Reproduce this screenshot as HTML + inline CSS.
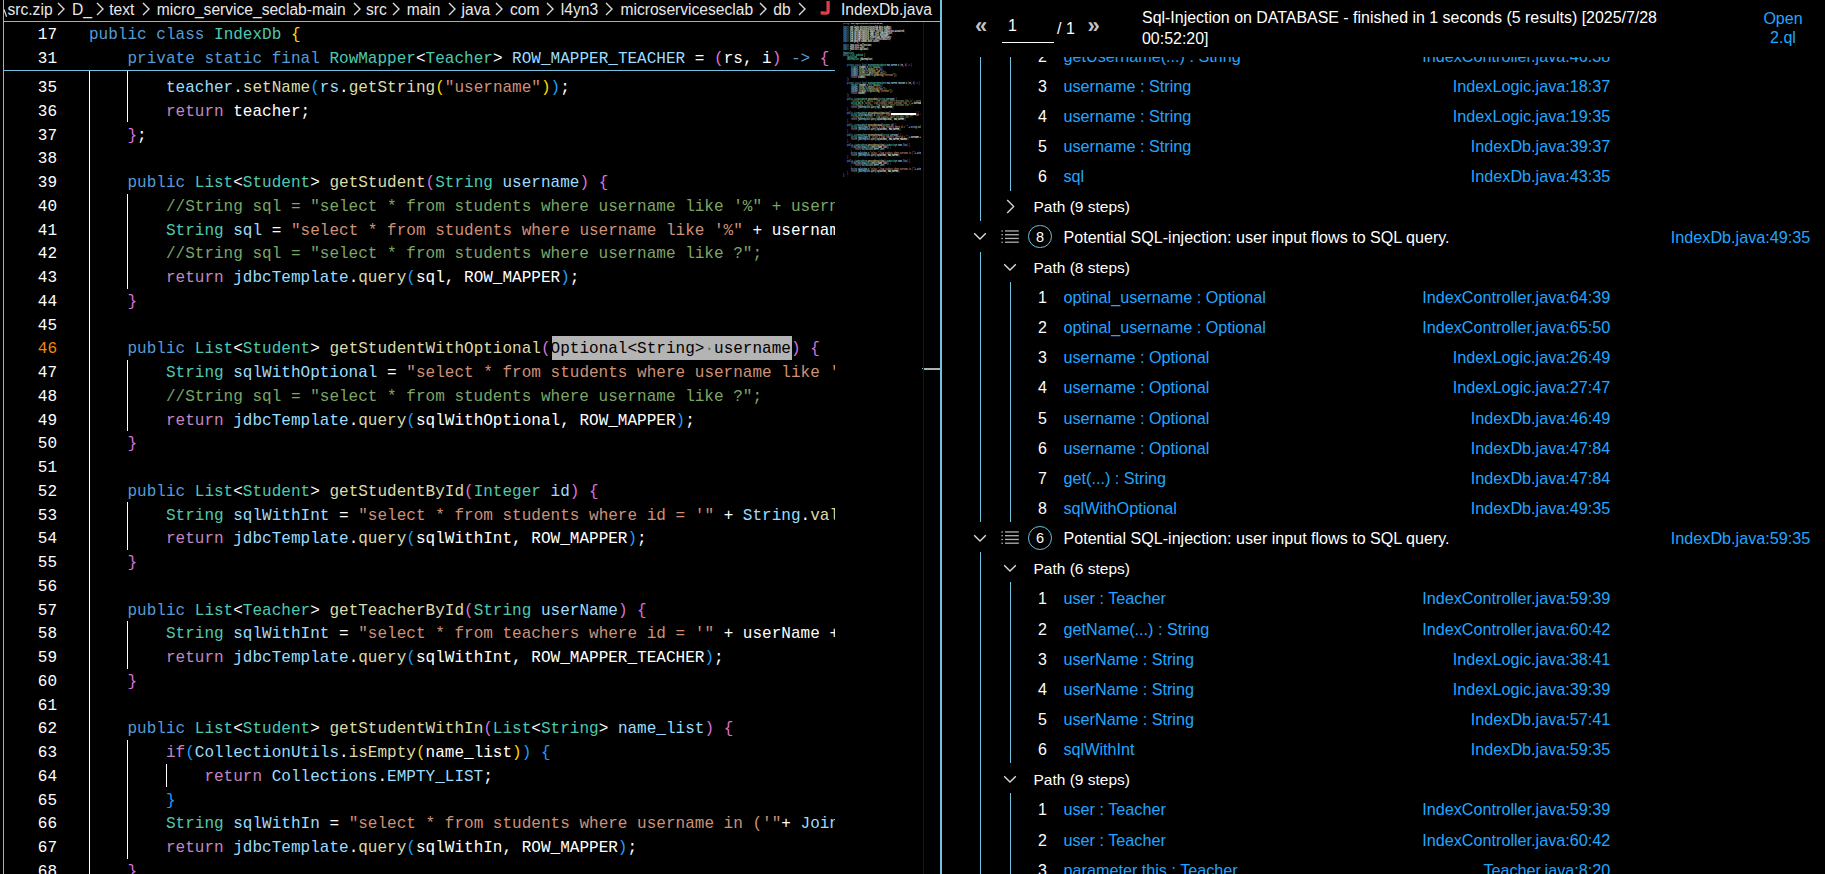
<!DOCTYPE html>
<html><head><meta charset="utf-8">
<style>
html,body{margin:0;padding:0;background:#000;width:1825px;height:874px;overflow:hidden;position:relative}
.abs{position:absolute}
.code{position:absolute;white-space:pre;font-family:"Liberation Mono",monospace;font-size:17.00px;line-height:23.75px;height:23.75px;transform:scaleX(0.94249);transform-origin:0 0}
.ln{position:absolute;left:0;width:57px;text-align:right;white-space:pre;font-family:"Liberation Mono",monospace;font-size:17.00px;line-height:23.75px;color:#fff;transform:scaleX(0.94249);transform-origin:100% 0}
.ui{position:absolute;white-space:pre;font-family:"Liberation Sans",sans-serif;font-size:16px;}
.guide{position:absolute;width:1px;background:#fff}
.tg{position:absolute;width:1px;background:#6FC3DF}
</style></head><body>
<div class="abs" style="left:3px;top:0;width:1px;height:874px;background:#6FC3DF"></div><div class="abs" style="left:3px;top:21px;width:938px;height:1px;background:#6FC3DF"></div><div class="abs" style="left:940px;top:0;width:2px;height:874px;background:#6FC3DF"></div><div class="abs" style="left:4px;top:0;width:936px;height:21px;overflow:hidden"><div class="ui bc" style="left:3.5px;top:0;height:21px;line-height:20px;font-size:15.6px;color:#e8e8e8">src.zip</div><div class="ui bc" style="left:68.0px;top:0;height:21px;line-height:20px;font-size:15.6px;color:#e8e8e8">D_</div><div class="ui bc" style="left:105.2px;top:0;height:21px;line-height:20px;font-size:15.6px;color:#e8e8e8">text</div><div class="ui bc" style="left:152.8px;top:0;height:21px;line-height:20px;font-size:15.6px;color:#e8e8e8">micro_service_seclab-main</div><div class="ui bc" style="left:362.0px;top:0;height:21px;line-height:20px;font-size:15.6px;color:#e8e8e8">src</div><div class="ui bc" style="left:402.7px;top:0;height:21px;line-height:20px;font-size:15.6px;color:#e8e8e8">main</div><div class="ui bc" style="left:457.5px;top:0;height:21px;line-height:20px;font-size:15.6px;color:#e8e8e8">java</div><div class="ui bc" style="left:506.0px;top:0;height:21px;line-height:20px;font-size:15.6px;color:#e8e8e8">com</div><div class="ui bc" style="left:556.8px;top:0;height:21px;line-height:20px;font-size:15.6px;color:#e8e8e8">l4yn3</div><div class="ui bc" style="left:616.5px;top:0;height:21px;line-height:20px;font-size:15.6px;color:#e8e8e8">microserviceseclab</div><div class="ui bc" style="left:769.3px;top:0;height:21px;line-height:20px;font-size:15.6px;color:#e8e8e8">db</div><svg class="abs" style="left:0;top:0" width="6" height="20" viewBox="0 0 6 20"><path d="M0 9.5 L2.6 16.8" stroke="#e0e0e0" stroke-width="1.2" fill="none"/></svg><svg class="abs" style="left:53.3px;top:1.5px" width="9" height="14" viewBox="0 0 9 14"><path d="M1 1 L7 7 L1 13" fill="none" stroke="#dcdcdc" stroke-width="1.4"/></svg><svg class="abs" style="left:91.5px;top:1.5px" width="9" height="14" viewBox="0 0 9 14"><path d="M1 1 L7 7 L1 13" fill="none" stroke="#dcdcdc" stroke-width="1.4"/></svg><svg class="abs" style="left:138.4px;top:1.5px" width="9" height="14" viewBox="0 0 9 14"><path d="M1 1 L7 7 L1 13" fill="none" stroke="#dcdcdc" stroke-width="1.4"/></svg><svg class="abs" style="left:349.0px;top:1.5px" width="9" height="14" viewBox="0 0 9 14"><path d="M1 1 L7 7 L1 13" fill="none" stroke="#dcdcdc" stroke-width="1.4"/></svg><svg class="abs" style="left:388.0px;top:1.5px" width="9" height="14" viewBox="0 0 9 14"><path d="M1 1 L7 7 L1 13" fill="none" stroke="#dcdcdc" stroke-width="1.4"/></svg><svg class="abs" style="left:443.5px;top:1.5px" width="9" height="14" viewBox="0 0 9 14"><path d="M1 1 L7 7 L1 13" fill="none" stroke="#dcdcdc" stroke-width="1.4"/></svg><svg class="abs" style="left:491.4px;top:1.5px" width="9" height="14" viewBox="0 0 9 14"><path d="M1 1 L7 7 L1 13" fill="none" stroke="#dcdcdc" stroke-width="1.4"/></svg><svg class="abs" style="left:542.0px;top:1.5px" width="9" height="14" viewBox="0 0 9 14"><path d="M1 1 L7 7 L1 13" fill="none" stroke="#dcdcdc" stroke-width="1.4"/></svg><svg class="abs" style="left:601.0px;top:1.5px" width="9" height="14" viewBox="0 0 9 14"><path d="M1 1 L7 7 L1 13" fill="none" stroke="#dcdcdc" stroke-width="1.4"/></svg><svg class="abs" style="left:755.3px;top:1.5px" width="9" height="14" viewBox="0 0 9 14"><path d="M1 1 L7 7 L1 13" fill="none" stroke="#dcdcdc" stroke-width="1.4"/></svg><svg class="abs" style="left:793.6px;top:1.5px" width="9" height="14" viewBox="0 0 9 14"><path d="M1 1 L7 7 L1 13" fill="none" stroke="#dcdcdc" stroke-width="1.4"/></svg><svg class="abs" style="left:816.0px;top:0" width="14" height="18" viewBox="0 0 14 18"><path d="M8.1 0.9 V11.6 Q8.1 13.2 6.4 13.2 H2.2 V11.2" fill="none" stroke="#dc3f48" stroke-width="3.3" stroke-linejoin="round"/></svg><div class="ui bc" style="left:836.9px;top:0;height:21px;line-height:20px;font-size:15.6px;color:#e8e8e8">IndexDb.java</div></div><div class="abs" style="left:4px;top:22px;width:831px;height:852px;overflow:hidden"><div class="ln" style="top:30.40px;width:53px">34</div><div class="code" style="left:84.80px;top:30.40px"><span style="color:#FFFFFF">        </span><span style="color:#9CDCFE">teacher</span><span style="color:#FFFFFF">.</span><span style="color:#DCDCAA">setSex</span><span style="color:#179FFF">(</span><span style="color:#9CDCFE">rs</span><span style="color:#FFFFFF">.</span><span style="color:#DCDCAA">getString</span><span style="color:#FFD700">(</span><span style="color:#CE9178">&quot;sex&quot;</span><span style="color:#FFD700">)</span><span style="color:#179FFF">)</span><span style="color:#FFFFFF">;</span></div><div class="ln" style="top:54.15px;width:53px">35</div><div class="code" style="left:84.80px;top:54.15px"><span style="color:#FFFFFF">        </span><span style="color:#9CDCFE">teacher</span><span style="color:#FFFFFF">.</span><span style="color:#DCDCAA">setName</span><span style="color:#179FFF">(</span><span style="color:#9CDCFE">rs</span><span style="color:#FFFFFF">.</span><span style="color:#DCDCAA">getString</span><span style="color:#FFD700">(</span><span style="color:#CE9178">&quot;username&quot;</span><span style="color:#FFD700">)</span><span style="color:#179FFF">)</span><span style="color:#FFFFFF">;</span></div><div class="ln" style="top:77.90px;width:53px">36</div><div class="code" style="left:84.80px;top:77.90px"><span style="color:#FFFFFF">        </span><span style="color:#C586C0">return</span><span style="color:#FFFFFF"> teacher;</span></div><div class="ln" style="top:101.65px;width:53px">37</div><div class="code" style="left:84.80px;top:101.65px"><span style="color:#FFFFFF">    </span><span style="color:#DA70D6">}</span><span style="color:#FFFFFF">;</span></div><div class="ln" style="top:125.40px;width:53px">38</div><div class="code" style="left:84.80px;top:125.40px"></div><div class="ln" style="top:149.15px;width:53px">39</div><div class="code" style="left:84.80px;top:149.15px"><span style="color:#FFFFFF">    </span><span style="color:#569CD6">public</span><span style="color:#FFFFFF"> </span><span style="color:#4EC9B0">List</span><span style="color:#FFFFFF">&lt;</span><span style="color:#4EC9B0">Student</span><span style="color:#FFFFFF">&gt; </span><span style="color:#DCDCAA">getStudent</span><span style="color:#DA70D6">(</span><span style="color:#4EC9B0">String</span><span style="color:#FFFFFF"> </span><span style="color:#9CDCFE">username</span><span style="color:#DA70D6">)</span><span style="color:#FFFFFF"> </span><span style="color:#DA70D6">{</span></div><div class="ln" style="top:172.90px;width:53px">40</div><div class="code" style="left:84.80px;top:172.90px"><span style="color:#FFFFFF">        </span><span style="color:#7CA668">//String sql = &quot;select * from students where username like &#x27;%&quot; + username + &quot;%&#x27;&quot;;</span></div><div class="ln" style="top:196.65px;width:53px">41</div><div class="code" style="left:84.80px;top:196.65px"><span style="color:#FFFFFF">        </span><span style="color:#4EC9B0">String</span><span style="color:#FFFFFF"> </span><span style="color:#9CDCFE">sql</span><span style="color:#FFFFFF"> = </span><span style="color:#CE9178">&quot;select * from students where username like &#x27;%&quot;</span><span style="color:#FFFFFF"> + username + </span><span style="color:#CE9178">&quot;%&#x27;&quot;</span><span style="color:#FFFFFF">;</span></div><div class="ln" style="top:220.40px;width:53px">42</div><div class="code" style="left:84.80px;top:220.40px"><span style="color:#FFFFFF">        </span><span style="color:#7CA668">//String sql = &quot;select * from students where username like ?&quot;;</span></div><div class="ln" style="top:244.15px;width:53px">43</div><div class="code" style="left:84.80px;top:244.15px"><span style="color:#FFFFFF">        </span><span style="color:#C586C0">return</span><span style="color:#FFFFFF"> </span><span style="color:#9CDCFE">jdbcTemplate</span><span style="color:#FFFFFF">.</span><span style="color:#DCDCAA">query</span><span style="color:#179FFF">(</span><span style="color:#FFFFFF">sql, ROW_MAPPER</span><span style="color:#179FFF">)</span><span style="color:#FFFFFF">;</span></div><div class="ln" style="top:267.90px;width:53px">44</div><div class="code" style="left:84.80px;top:267.90px"><span style="color:#FFFFFF">    </span><span style="color:#DA70D6">}</span></div><div class="ln" style="top:291.65px;width:53px">45</div><div class="code" style="left:84.80px;top:291.65px"></div><div class="ln" style="top:315.40px;width:53px;color:#F38518">46</div><div class="abs" style="left:548.00px;top:314.00px;width:240px;height:23.75px;background:#b4b4b4"></div><div class="code" style="left:84.80px;top:315.40px"><span style="color:#FFFFFF">    </span><span style="color:#569CD6">public</span><span style="color:#FFFFFF"> </span><span style="color:#4EC9B0">List</span><span style="color:#FFFFFF">&lt;</span><span style="color:#4EC9B0">Student</span><span style="color:#FFFFFF">&gt; </span><span style="color:#DCDCAA">getStudentWithOptional</span><span style="color:#DA70D6">(</span><span style="color:#000000">Optional&lt;String&gt;</span><span style="color:#6a6a6a">·</span><span style="color:#000000">username</span><span style="color:#DA70D6">)</span><span style="color:#FFFFFF"> </span><span style="color:#DA70D6">{</span></div><div class="ln" style="top:339.15px;width:53px">47</div><div class="code" style="left:84.80px;top:339.15px"><span style="color:#FFFFFF">        </span><span style="color:#4EC9B0">String</span><span style="color:#FFFFFF"> </span><span style="color:#9CDCFE">sqlWithOptional</span><span style="color:#FFFFFF"> = </span><span style="color:#CE9178">&quot;select * from students where username like &#x27;%&quot;</span><span style="color:#FFFFFF"> + username.get() + </span><span style="color:#CE9178">&quot;%&#x27;&quot;</span><span style="color:#FFFFFF">;</span></div><div class="ln" style="top:362.90px;width:53px">48</div><div class="code" style="left:84.80px;top:362.90px"><span style="color:#FFFFFF">        </span><span style="color:#7CA668">//String sql = &quot;select * from students where username like ?&quot;;</span></div><div class="ln" style="top:386.65px;width:53px">49</div><div class="code" style="left:84.80px;top:386.65px"><span style="color:#FFFFFF">        </span><span style="color:#C586C0">return</span><span style="color:#FFFFFF"> </span><span style="color:#9CDCFE">jdbcTemplate</span><span style="color:#FFFFFF">.</span><span style="color:#DCDCAA">query</span><span style="color:#179FFF">(</span><span style="color:#FFFFFF">sqlWithOptional, ROW_MAPPER</span><span style="color:#179FFF">)</span><span style="color:#FFFFFF">;</span></div><div class="ln" style="top:410.40px;width:53px">50</div><div class="code" style="left:84.80px;top:410.40px"><span style="color:#FFFFFF">    </span><span style="color:#DA70D6">}</span></div><div class="ln" style="top:434.15px;width:53px">51</div><div class="code" style="left:84.80px;top:434.15px"></div><div class="ln" style="top:457.90px;width:53px">52</div><div class="code" style="left:84.80px;top:457.90px"><span style="color:#FFFFFF">    </span><span style="color:#569CD6">public</span><span style="color:#FFFFFF"> </span><span style="color:#4EC9B0">List</span><span style="color:#FFFFFF">&lt;</span><span style="color:#4EC9B0">Student</span><span style="color:#FFFFFF">&gt; </span><span style="color:#DCDCAA">getStudentById</span><span style="color:#DA70D6">(</span><span style="color:#4EC9B0">Integer</span><span style="color:#FFFFFF"> </span><span style="color:#9CDCFE">id</span><span style="color:#DA70D6">)</span><span style="color:#FFFFFF"> </span><span style="color:#DA70D6">{</span></div><div class="ln" style="top:481.65px;width:53px">53</div><div class="code" style="left:84.80px;top:481.65px"><span style="color:#FFFFFF">        </span><span style="color:#4EC9B0">String</span><span style="color:#FFFFFF"> </span><span style="color:#9CDCFE">sqlWithInt</span><span style="color:#FFFFFF"> = </span><span style="color:#CE9178">&quot;select * from students where id = &#x27;&quot;</span><span style="color:#FFFFFF"> + </span><span style="color:#9CDCFE">String</span><span style="color:#FFFFFF">.</span><span style="color:#DCDCAA">valueOf</span><span style="color:#179FFF">(</span><span style="color:#FFFFFF">id</span><span style="color:#179FFF">)</span><span style="color:#FFFFFF"> + </span><span style="color:#CE9178">&quot;&#x27;&quot;</span><span style="color:#FFFFFF">;</span></div><div class="ln" style="top:505.40px;width:53px">54</div><div class="code" style="left:84.80px;top:505.40px"><span style="color:#FFFFFF">        </span><span style="color:#C586C0">return</span><span style="color:#FFFFFF"> </span><span style="color:#9CDCFE">jdbcTemplate</span><span style="color:#FFFFFF">.</span><span style="color:#DCDCAA">query</span><span style="color:#179FFF">(</span><span style="color:#FFFFFF">sqlWithInt, ROW_MAPPER</span><span style="color:#179FFF">)</span><span style="color:#FFFFFF">;</span></div><div class="ln" style="top:529.15px;width:53px">55</div><div class="code" style="left:84.80px;top:529.15px"><span style="color:#FFFFFF">    </span><span style="color:#DA70D6">}</span></div><div class="ln" style="top:552.90px;width:53px">56</div><div class="code" style="left:84.80px;top:552.90px"></div><div class="ln" style="top:576.65px;width:53px">57</div><div class="code" style="left:84.80px;top:576.65px"><span style="color:#FFFFFF">    </span><span style="color:#569CD6">public</span><span style="color:#FFFFFF"> </span><span style="color:#4EC9B0">List</span><span style="color:#FFFFFF">&lt;</span><span style="color:#4EC9B0">Teacher</span><span style="color:#FFFFFF">&gt; </span><span style="color:#DCDCAA">getTeacherById</span><span style="color:#DA70D6">(</span><span style="color:#4EC9B0">String</span><span style="color:#FFFFFF"> </span><span style="color:#9CDCFE">userName</span><span style="color:#DA70D6">)</span><span style="color:#FFFFFF"> </span><span style="color:#DA70D6">{</span></div><div class="ln" style="top:600.40px;width:53px">58</div><div class="code" style="left:84.80px;top:600.40px"><span style="color:#FFFFFF">        </span><span style="color:#4EC9B0">String</span><span style="color:#FFFFFF"> </span><span style="color:#9CDCFE">sqlWithInt</span><span style="color:#FFFFFF"> = </span><span style="color:#CE9178">&quot;select * from teachers where id = &#x27;&quot;</span><span style="color:#FFFFFF"> + userName + </span><span style="color:#CE9178">&quot;&#x27;&quot;</span><span style="color:#FFFFFF">;</span></div><div class="ln" style="top:624.15px;width:53px">59</div><div class="code" style="left:84.80px;top:624.15px"><span style="color:#FFFFFF">        </span><span style="color:#C586C0">return</span><span style="color:#FFFFFF"> </span><span style="color:#9CDCFE">jdbcTemplate</span><span style="color:#FFFFFF">.</span><span style="color:#DCDCAA">query</span><span style="color:#179FFF">(</span><span style="color:#FFFFFF">sqlWithInt, ROW_MAPPER_TEACHER</span><span style="color:#179FFF">)</span><span style="color:#FFFFFF">;</span></div><div class="ln" style="top:647.90px;width:53px">60</div><div class="code" style="left:84.80px;top:647.90px"><span style="color:#FFFFFF">    </span><span style="color:#DA70D6">}</span></div><div class="ln" style="top:671.65px;width:53px">61</div><div class="code" style="left:84.80px;top:671.65px"></div><div class="ln" style="top:695.40px;width:53px">62</div><div class="code" style="left:84.80px;top:695.40px"><span style="color:#FFFFFF">    </span><span style="color:#569CD6">public</span><span style="color:#FFFFFF"> </span><span style="color:#4EC9B0">List</span><span style="color:#FFFFFF">&lt;</span><span style="color:#4EC9B0">Student</span><span style="color:#FFFFFF">&gt; </span><span style="color:#DCDCAA">getStudentWithIn</span><span style="color:#DA70D6">(</span><span style="color:#4EC9B0">List</span><span style="color:#FFFFFF">&lt;</span><span style="color:#4EC9B0">String</span><span style="color:#FFFFFF">&gt; </span><span style="color:#9CDCFE">name_list</span><span style="color:#DA70D6">)</span><span style="color:#FFFFFF"> </span><span style="color:#DA70D6">{</span></div><div class="ln" style="top:719.15px;width:53px">63</div><div class="code" style="left:84.80px;top:719.15px"><span style="color:#FFFFFF">        </span><span style="color:#C586C0">if</span><span style="color:#179FFF">(</span><span style="color:#9CDCFE">CollectionUtils</span><span style="color:#FFFFFF">.</span><span style="color:#DCDCAA">isEmpty</span><span style="color:#FFD700">(</span><span style="color:#FFFFFF">name_list</span><span style="color:#FFD700">)</span><span style="color:#179FFF">)</span><span style="color:#FFFFFF"> </span><span style="color:#179FFF">{</span></div><div class="ln" style="top:742.90px;width:53px">64</div><div class="code" style="left:84.80px;top:742.90px"><span style="color:#FFFFFF">            </span><span style="color:#C586C0">return</span><span style="color:#FFFFFF"> </span><span style="color:#9CDCFE">Collections</span><span style="color:#FFFFFF">.</span><span style="color:#9CDCFE">EMPTY_LIST</span><span style="color:#FFFFFF">;</span></div><div class="ln" style="top:766.65px;width:53px">65</div><div class="code" style="left:84.80px;top:766.65px"><span style="color:#FFFFFF">        </span><span style="color:#179FFF">}</span></div><div class="ln" style="top:790.40px;width:53px">66</div><div class="code" style="left:84.80px;top:790.40px"><span style="color:#FFFFFF">        </span><span style="color:#4EC9B0">String</span><span style="color:#FFFFFF"> </span><span style="color:#9CDCFE">sqlWithIn</span><span style="color:#FFFFFF"> = </span><span style="color:#CE9178">&quot;select * from students where username in (&#x27;&quot;</span><span style="color:#FFFFFF">+ </span><span style="color:#9CDCFE">Joiner</span><span style="color:#FFFFFF">.</span><span style="color:#DCDCAA">on</span><span style="color:#179FFF">(</span><span style="color:#CE9178">&quot;&#x27;,&#x27;&quot;</span><span style="color:#179FFF">)</span><span style="color:#FFFFFF">;</span></div><div class="ln" style="top:814.15px;width:53px">67</div><div class="code" style="left:84.80px;top:814.15px"><span style="color:#FFFFFF">        </span><span style="color:#C586C0">return</span><span style="color:#FFFFFF"> </span><span style="color:#9CDCFE">jdbcTemplate</span><span style="color:#FFFFFF">.</span><span style="color:#DCDCAA">query</span><span style="color:#179FFF">(</span><span style="color:#FFFFFF">sqlWithIn, ROW_MAPPER</span><span style="color:#179FFF">)</span><span style="color:#FFFFFF">;</span></div><div class="ln" style="top:837.90px;width:53px">68</div><div class="code" style="left:84.80px;top:837.90px"><span style="color:#FFFFFF">    </span><span style="color:#DA70D6">}</span></div><div class="guide" style="left:85.00px;top:48.00px;height:804.00px"></div><div class="guide" style="left:123.46px;top:29.00px;height:71.25px"></div><div class="guide" style="left:123.46px;top:171.50px;height:95.00px"></div><div class="guide" style="left:123.46px;top:337.75px;height:71.25px"></div><div class="guide" style="left:123.46px;top:480.25px;height:47.50px"></div><div class="guide" style="left:123.46px;top:599.00px;height:47.50px"></div><div class="guide" style="left:123.46px;top:717.75px;height:118.75px"></div><div class="guide" style="left:161.92px;top:741.50px;height:23.75px"></div><div class="abs" style="left:0;top:0;width:831px;height:48px;background:#000"></div><div class="ln" style="top:1.40px;width:53px">17</div><div class="code" style="left:84.80px;top:1.40px"><span style="color:#569CD6">public</span><span style="color:#FFFFFF"> </span><span style="color:#569CD6">class</span><span style="color:#FFFFFF"> </span><span style="color:#4EC9B0">IndexDb</span><span style="color:#FFFFFF"> </span><span style="color:#FFD700">{</span></div><div class="ln" style="top:25.15px;width:53px">31</div><div class="code" style="left:84.80px;top:25.15px"><span style="color:#FFFFFF">    </span><span style="color:#569CD6">private</span><span style="color:#FFFFFF"> </span><span style="color:#569CD6">static</span><span style="color:#FFFFFF"> </span><span style="color:#569CD6">final</span><span style="color:#FFFFFF"> </span><span style="color:#4EC9B0">RowMapper</span><span style="color:#FFFFFF">&lt;</span><span style="color:#4EC9B0">Teacher</span><span style="color:#FFFFFF">&gt; </span><span style="color:#9CDCFE">ROW_MAPPER_TEACHER</span><span style="color:#FFFFFF"> = </span><span style="color:#DA70D6">(</span><span style="color:#FFFFFF">rs, i</span><span style="color:#DA70D6">)</span><span style="color:#FFFFFF"> </span><span style="color:#569CD6">-&gt;</span><span style="color:#FFFFFF"> </span><span style="color:#DA70D6">{</span></div><div class="abs" style="left:0;top:48px;width:831px;height:1px;background:#6FC3DF"></div></div><div class="abs" style="left:843.0px;top:23.0px;width:78px;height:160px;overflow:hidden"><div class="abs" style="left:0;top:0;width:160px;height:160px;transform:scaleX(0.5747);transform-origin:0 0"><div class="abs" style="left:0;top:-0.3px;white-space:pre;font-family:'Liberation Mono',monospace;font-size:2.9px;line-height:2px;font-weight:bold"><span style="color:#569CD6">package</span><span style="color:#FFFFFF"> com.l4yn3.microserviceseclab.db;</span></div><div class="abs" style="left:0;top:3.7px;white-space:pre;font-family:'Liberation Mono',monospace;font-size:2.9px;line-height:2px;font-weight:bold"><span style="color:#569CD6">import</span><span style="color:#FFFFFF"> com.l4yn3.microserviceseclab.data.Student;</span></div><div class="abs" style="left:0;top:5.7px;white-space:pre;font-family:'Liberation Mono',monospace;font-size:2.9px;line-height:2px;font-weight:bold"><span style="color:#569CD6">import</span><span style="color:#FFFFFF"> com.l4yn3.microserviceseclab.data.Teacher;</span></div><div class="abs" style="left:0;top:7.7px;white-space:pre;font-family:'Liberation Mono',monospace;font-size:2.9px;line-height:2px;font-weight:bold"><span style="color:#569CD6">import</span><span style="color:#FFFFFF"> org.springframework.beans.factory.annotation.Autowired;</span></div><div class="abs" style="left:0;top:9.7px;white-space:pre;font-family:'Liberation Mono',monospace;font-size:2.9px;line-height:2px;font-weight:bold"><span style="color:#569CD6">import</span><span style="color:#FFFFFF"> org.springframework.jdbc.core.JdbcTemplate;</span></div><div class="abs" style="left:0;top:11.7px;white-space:pre;font-family:'Liberation Mono',monospace;font-size:2.9px;line-height:2px;font-weight:bold"><span style="color:#569CD6">import</span><span style="color:#FFFFFF"> org.springframework.jdbc.core.RowMapper;</span></div><div class="abs" style="left:0;top:13.7px;white-space:pre;font-family:'Liberation Mono',monospace;font-size:2.9px;line-height:2px;font-weight:bold"><span style="color:#569CD6">import</span><span style="color:#FFFFFF"> org.springframework.stereotype.Repository;</span></div><div class="abs" style="left:0;top:15.7px;white-space:pre;font-family:'Liberation Mono',monospace;font-size:2.9px;line-height:2px;font-weight:bold"><span style="color:#569CD6">import</span><span style="color:#FFFFFF"> org.springframework.util.CollectionUtils;</span></div><div class="abs" style="left:0;top:17.7px;white-space:pre;font-family:'Liberation Mono',monospace;font-size:2.9px;line-height:2px;font-weight:bold"><span style="color:#569CD6">import</span><span style="color:#FFFFFF"> com.google.common.base.Joiner;</span></div><div class="abs" style="left:0;top:21.7px;white-space:pre;font-family:'Liberation Mono',monospace;font-size:2.9px;line-height:2px;font-weight:bold"><span style="color:#569CD6">import</span><span style="color:#FFFFFF"> java.util.Collections;</span></div><div class="abs" style="left:0;top:23.7px;white-space:pre;font-family:'Liberation Mono',monospace;font-size:2.9px;line-height:2px;font-weight:bold"><span style="color:#569CD6">import</span><span style="color:#FFFFFF"> java.util.List;</span></div><div class="abs" style="left:0;top:25.7px;white-space:pre;font-family:'Liberation Mono',monospace;font-size:2.9px;line-height:2px;font-weight:bold"><span style="color:#569CD6">import</span><span style="color:#FFFFFF"> java.util.Optional;</span></div><div class="abs" style="left:0;top:29.7px;white-space:pre;font-family:'Liberation Mono',monospace;font-size:2.9px;line-height:2px;font-weight:bold"><span style="color:#4EC9B0">@Repository</span></div><div class="abs" style="left:0;top:31.7px;white-space:pre;font-family:'Liberation Mono',monospace;font-size:2.9px;line-height:2px;font-weight:bold"><span style="color:#569CD6">public</span><span style="color:#FFFFFF"> </span><span style="color:#569CD6">class</span><span style="color:#FFFFFF"> </span><span style="color:#4EC9B0">IndexDb</span><span style="color:#FFFFFF"> </span><span style="color:#FFD700">{</span></div><div class="abs" style="left:0;top:33.7px;white-space:pre;font-family:'Liberation Mono',monospace;font-size:2.9px;line-height:2px;font-weight:bold"><span style="color:#FFFFFF">    </span><span style="color:#4EC9B0">@Autowired</span></div><div class="abs" style="left:0;top:35.7px;white-space:pre;font-family:'Liberation Mono',monospace;font-size:2.9px;line-height:2px;font-weight:bold"><span style="color:#FFFFFF">    </span><span style="color:#4EC9B0">JdbcTemplate</span><span style="color:#FFFFFF"> jdbcTemplate;</span></div><div class="abs" style="left:0;top:41.7px;white-space:pre;font-family:'Liberation Mono',monospace;font-size:2.9px;line-height:2px;font-weight:bold"><span style="color:#FFFFFF">    </span><span style="color:#569CD6">private</span><span style="color:#FFFFFF"> </span><span style="color:#569CD6">static</span><span style="color:#FFFFFF"> </span><span style="color:#569CD6">final</span><span style="color:#FFFFFF"> </span><span style="color:#4EC9B0">RowMapper</span><span style="color:#FFFFFF">&lt;</span><span style="color:#4EC9B0">Student</span><span style="color:#FFFFFF">&gt; </span><span style="color:#9CDCFE">ROW_MAPPER</span><span style="color:#FFFFFF"> = </span><span style="color:#DA70D6">(</span><span style="color:#FFFFFF">rs, i</span><span style="color:#DA70D6">)</span><span style="color:#FFFFFF"> </span><span style="color:#569CD6">-&gt;</span><span style="color:#FFFFFF"> </span><span style="color:#DA70D6">{</span></div><div class="abs" style="left:0;top:43.7px;white-space:pre;font-family:'Liberation Mono',monospace;font-size:2.9px;line-height:2px;font-weight:bold"><span style="color:#FFFFFF">        </span><span style="color:#4EC9B0">Student</span><span style="color:#FFFFFF"> student = </span><span style="color:#569CD6">new</span><span style="color:#FFFFFF"> </span><span style="color:#4EC9B0">Student</span><span style="color:#179FFF">()</span><span style="color:#FFFFFF">;</span></div><div class="abs" style="left:0;top:45.7px;white-space:pre;font-family:'Liberation Mono',monospace;font-size:2.9px;line-height:2px;font-weight:bold"><span style="color:#FFFFFF">        </span><span style="color:#9CDCFE">student</span><span style="color:#FFFFFF">.</span><span style="color:#DCDCAA">setId</span><span style="color:#179FFF">(</span><span style="color:#9CDCFE">rs</span><span style="color:#FFFFFF">.</span><span style="color:#DCDCAA">getInt</span><span style="color:#FFD700">(</span><span style="color:#CE9178">&quot;id&quot;</span><span style="color:#FFD700">)</span><span style="color:#179FFF">)</span><span style="color:#FFFFFF">;</span></div><div class="abs" style="left:0;top:47.7px;white-space:pre;font-family:'Liberation Mono',monospace;font-size:2.9px;line-height:2px;font-weight:bold"><span style="color:#FFFFFF">        </span><span style="color:#9CDCFE">student</span><span style="color:#FFFFFF">.</span><span style="color:#DCDCAA">setAge</span><span style="color:#179FFF">(</span><span style="color:#9CDCFE">rs</span><span style="color:#FFFFFF">.</span><span style="color:#DCDCAA">getInt</span><span style="color:#FFD700">(</span><span style="color:#CE9178">&quot;age&quot;</span><span style="color:#FFD700">)</span><span style="color:#179FFF">)</span><span style="color:#FFFFFF">;</span></div><div class="abs" style="left:0;top:49.7px;white-space:pre;font-family:'Liberation Mono',monospace;font-size:2.9px;line-height:2px;font-weight:bold"><span style="color:#FFFFFF">        </span><span style="color:#9CDCFE">student</span><span style="color:#FFFFFF">.</span><span style="color:#DCDCAA">setSex</span><span style="color:#179FFF">(</span><span style="color:#9CDCFE">rs</span><span style="color:#FFFFFF">.</span><span style="color:#DCDCAA">getString</span><span style="color:#FFD700">(</span><span style="color:#CE9178">&quot;sex&quot;</span><span style="color:#FFD700">)</span><span style="color:#179FFF">)</span><span style="color:#FFFFFF">;</span></div><div class="abs" style="left:0;top:51.7px;white-space:pre;font-family:'Liberation Mono',monospace;font-size:2.9px;line-height:2px;font-weight:bold"><span style="color:#FFFFFF">        </span><span style="color:#9CDCFE">student</span><span style="color:#FFFFFF">.</span><span style="color:#DCDCAA">setUsername</span><span style="color:#179FFF">(</span><span style="color:#9CDCFE">rs</span><span style="color:#FFFFFF">.</span><span style="color:#DCDCAA">getString</span><span style="color:#FFD700">(</span><span style="color:#CE9178">&quot;username&quot;</span><span style="color:#FFD700">)</span><span style="color:#179FFF">)</span><span style="color:#FFFFFF">;</span></div><div class="abs" style="left:0;top:53.7px;white-space:pre;font-family:'Liberation Mono',monospace;font-size:2.9px;line-height:2px;font-weight:bold"><span style="color:#FFFFFF">        </span><span style="color:#C586C0">return</span><span style="color:#FFFFFF"> student;</span></div><div class="abs" style="left:0;top:55.7px;white-space:pre;font-family:'Liberation Mono',monospace;font-size:2.9px;line-height:2px;font-weight:bold"><span style="color:#FFFFFF">    </span><span style="color:#DA70D6">}</span><span style="color:#FFFFFF">;</span></div><div class="abs" style="left:0;top:59.7px;white-space:pre;font-family:'Liberation Mono',monospace;font-size:2.9px;line-height:2px;font-weight:bold"><span style="color:#FFFFFF">    </span><span style="color:#569CD6">private</span><span style="color:#FFFFFF"> </span><span style="color:#569CD6">static</span><span style="color:#FFFFFF"> </span><span style="color:#569CD6">final</span><span style="color:#FFFFFF"> </span><span style="color:#4EC9B0">RowMapper</span><span style="color:#FFFFFF">&lt;</span><span style="color:#4EC9B0">Teacher</span><span style="color:#FFFFFF">&gt; </span><span style="color:#9CDCFE">ROW_MAPPER_TEACHER</span><span style="color:#FFFFFF"> = </span><span style="color:#DA70D6">(</span><span style="color:#FFFFFF">rs, i</span><span style="color:#DA70D6">)</span><span style="color:#FFFFFF"> </span><span style="color:#569CD6">-&gt;</span><span style="color:#FFFFFF"> </span><span style="color:#DA70D6">{</span></div><div class="abs" style="left:0;top:61.7px;white-space:pre;font-family:'Liberation Mono',monospace;font-size:2.9px;line-height:2px;font-weight:bold"><span style="color:#FFFFFF">        </span><span style="color:#4EC9B0">Teacher</span><span style="color:#FFFFFF"> teacher = </span><span style="color:#569CD6">new</span><span style="color:#FFFFFF"> </span><span style="color:#4EC9B0">Teacher</span><span style="color:#179FFF">()</span><span style="color:#FFFFFF">;</span></div><div class="abs" style="left:0;top:63.7px;white-space:pre;font-family:'Liberation Mono',monospace;font-size:2.9px;line-height:2px;font-weight:bold"><span style="color:#FFFFFF">        </span><span style="color:#9CDCFE">teacher</span><span style="color:#FFFFFF">.</span><span style="color:#DCDCAA">setId</span><span style="color:#179FFF">(</span><span style="color:#9CDCFE">rs</span><span style="color:#FFFFFF">.</span><span style="color:#DCDCAA">getInt</span><span style="color:#FFD700">(</span><span style="color:#CE9178">&quot;id&quot;</span><span style="color:#FFD700">)</span><span style="color:#179FFF">)</span><span style="color:#FFFFFF">;</span></div><div class="abs" style="left:0;top:65.7px;white-space:pre;font-family:'Liberation Mono',monospace;font-size:2.9px;line-height:2px;font-weight:bold"><span style="color:#FFFFFF">        </span><span style="color:#9CDCFE">teacher</span><span style="color:#FFFFFF">.</span><span style="color:#DCDCAA">setSex</span><span style="color:#179FFF">(</span><span style="color:#9CDCFE">rs</span><span style="color:#FFFFFF">.</span><span style="color:#DCDCAA">getString</span><span style="color:#FFD700">(</span><span style="color:#CE9178">&quot;sex&quot;</span><span style="color:#FFD700">)</span><span style="color:#179FFF">)</span><span style="color:#FFFFFF">;</span></div><div class="abs" style="left:0;top:67.7px;white-space:pre;font-family:'Liberation Mono',monospace;font-size:2.9px;line-height:2px;font-weight:bold"><span style="color:#FFFFFF">        </span><span style="color:#9CDCFE">teacher</span><span style="color:#FFFFFF">.</span><span style="color:#DCDCAA">setName</span><span style="color:#179FFF">(</span><span style="color:#9CDCFE">rs</span><span style="color:#FFFFFF">.</span><span style="color:#DCDCAA">getString</span><span style="color:#FFD700">(</span><span style="color:#CE9178">&quot;username&quot;</span><span style="color:#FFD700">)</span><span style="color:#179FFF">)</span><span style="color:#FFFFFF">;</span></div><div class="abs" style="left:0;top:69.7px;white-space:pre;font-family:'Liberation Mono',monospace;font-size:2.9px;line-height:2px;font-weight:bold"><span style="color:#FFFFFF">        </span><span style="color:#C586C0">return</span><span style="color:#FFFFFF"> teacher;</span></div><div class="abs" style="left:0;top:71.7px;white-space:pre;font-family:'Liberation Mono',monospace;font-size:2.9px;line-height:2px;font-weight:bold"><span style="color:#FFFFFF">    </span><span style="color:#DA70D6">}</span><span style="color:#FFFFFF">;</span></div><div class="abs" style="left:0;top:73.7px;white-space:pre;font-family:'Liberation Mono',monospace;font-size:2.9px;line-height:2px;font-weight:bold"></div><div class="abs" style="left:0;top:75.7px;white-space:pre;font-family:'Liberation Mono',monospace;font-size:2.9px;line-height:2px;font-weight:bold"><span style="color:#FFFFFF">    </span><span style="color:#569CD6">public</span><span style="color:#FFFFFF"> </span><span style="color:#4EC9B0">List</span><span style="color:#FFFFFF">&lt;</span><span style="color:#4EC9B0">Student</span><span style="color:#FFFFFF">&gt; </span><span style="color:#DCDCAA">getStudent</span><span style="color:#DA70D6">(</span><span style="color:#4EC9B0">String</span><span style="color:#FFFFFF"> </span><span style="color:#9CDCFE">username</span><span style="color:#DA70D6">)</span><span style="color:#FFFFFF"> </span><span style="color:#DA70D6">{</span></div><div class="abs" style="left:0;top:77.7px;white-space:pre;font-family:'Liberation Mono',monospace;font-size:2.9px;line-height:2px;font-weight:bold"><span style="color:#FFFFFF">        </span><span style="color:#7CA668">//String sql = &quot;select * from students where username like &#x27;%&quot; + username + &quot;%&#x27;&quot;;</span></div><div class="abs" style="left:0;top:79.7px;white-space:pre;font-family:'Liberation Mono',monospace;font-size:2.9px;line-height:2px;font-weight:bold"><span style="color:#FFFFFF">        </span><span style="color:#4EC9B0">String</span><span style="color:#FFFFFF"> </span><span style="color:#9CDCFE">sql</span><span style="color:#FFFFFF"> = </span><span style="color:#CE9178">&quot;select * from students where username like &#x27;%&quot;</span><span style="color:#FFFFFF"> + username + </span><span style="color:#CE9178">&quot;%&#x27;&quot;</span><span style="color:#FFFFFF">;</span></div><div class="abs" style="left:0;top:81.7px;white-space:pre;font-family:'Liberation Mono',monospace;font-size:2.9px;line-height:2px;font-weight:bold"><span style="color:#FFFFFF">        </span><span style="color:#7CA668">//String sql = &quot;select * from students where username like ?&quot;;</span></div><div class="abs" style="left:0;top:83.7px;white-space:pre;font-family:'Liberation Mono',monospace;font-size:2.9px;line-height:2px;font-weight:bold"><span style="color:#FFFFFF">        </span><span style="color:#C586C0">return</span><span style="color:#FFFFFF"> </span><span style="color:#9CDCFE">jdbcTemplate</span><span style="color:#FFFFFF">.</span><span style="color:#DCDCAA">query</span><span style="color:#179FFF">(</span><span style="color:#FFFFFF">sql, ROW_MAPPER</span><span style="color:#179FFF">)</span><span style="color:#FFFFFF">;</span></div><div class="abs" style="left:0;top:85.7px;white-space:pre;font-family:'Liberation Mono',monospace;font-size:2.9px;line-height:2px;font-weight:bold"><span style="color:#FFFFFF">    </span><span style="color:#DA70D6">}</span></div><div class="abs" style="left:0;top:87.7px;white-space:pre;font-family:'Liberation Mono',monospace;font-size:2.9px;line-height:2px;font-weight:bold"></div><div class="abs" style="left:0;top:89.7px;white-space:pre;font-family:'Liberation Mono',monospace;font-size:2.9px;line-height:2px;font-weight:bold"><span style="color:#FFFFFF">    </span><span style="color:#569CD6">public</span><span style="color:#FFFFFF"> </span><span style="color:#4EC9B0">List</span><span style="color:#FFFFFF">&lt;</span><span style="color:#4EC9B0">Student</span><span style="color:#FFFFFF">&gt; </span><span style="color:#DCDCAA">getStudentWithOptional</span><span style="color:#DA70D6">(</span><span style="color:#000000">Optional&lt;String&gt;</span><span style="color:#6a6a6a">·</span><span style="color:#000000">username</span><span style="color:#DA70D6">)</span><span style="color:#FFFFFF"> </span><span style="color:#DA70D6">{</span></div><div class="abs" style="left:0;top:91.7px;white-space:pre;font-family:'Liberation Mono',monospace;font-size:2.9px;line-height:2px;font-weight:bold"><span style="color:#FFFFFF">        </span><span style="color:#4EC9B0">String</span><span style="color:#FFFFFF"> </span><span style="color:#9CDCFE">sqlWithOptional</span><span style="color:#FFFFFF"> = </span><span style="color:#CE9178">&quot;select * from students where username like &#x27;%&quot;</span><span style="color:#FFFFFF"> + username.get() + </span><span style="color:#CE9178">&quot;%&#x27;&quot;</span><span style="color:#FFFFFF">;</span></div><div class="abs" style="left:0;top:93.7px;white-space:pre;font-family:'Liberation Mono',monospace;font-size:2.9px;line-height:2px;font-weight:bold"><span style="color:#FFFFFF">        </span><span style="color:#7CA668">//String sql = &quot;select * from students where username like ?&quot;;</span></div><div class="abs" style="left:0;top:95.7px;white-space:pre;font-family:'Liberation Mono',monospace;font-size:2.9px;line-height:2px;font-weight:bold"><span style="color:#FFFFFF">        </span><span style="color:#C586C0">return</span><span style="color:#FFFFFF"> </span><span style="color:#9CDCFE">jdbcTemplate</span><span style="color:#FFFFFF">.</span><span style="color:#DCDCAA">query</span><span style="color:#179FFF">(</span><span style="color:#FFFFFF">sqlWithOptional, ROW_MAPPER</span><span style="color:#179FFF">)</span><span style="color:#FFFFFF">;</span></div><div class="abs" style="left:0;top:97.7px;white-space:pre;font-family:'Liberation Mono',monospace;font-size:2.9px;line-height:2px;font-weight:bold"><span style="color:#FFFFFF">    </span><span style="color:#DA70D6">}</span></div><div class="abs" style="left:0;top:99.7px;white-space:pre;font-family:'Liberation Mono',monospace;font-size:2.9px;line-height:2px;font-weight:bold"></div><div class="abs" style="left:0;top:101.7px;white-space:pre;font-family:'Liberation Mono',monospace;font-size:2.9px;line-height:2px;font-weight:bold"><span style="color:#FFFFFF">    </span><span style="color:#569CD6">public</span><span style="color:#FFFFFF"> </span><span style="color:#4EC9B0">List</span><span style="color:#FFFFFF">&lt;</span><span style="color:#4EC9B0">Student</span><span style="color:#FFFFFF">&gt; </span><span style="color:#DCDCAA">getStudentById</span><span style="color:#DA70D6">(</span><span style="color:#4EC9B0">Integer</span><span style="color:#FFFFFF"> </span><span style="color:#9CDCFE">id</span><span style="color:#DA70D6">)</span><span style="color:#FFFFFF"> </span><span style="color:#DA70D6">{</span></div><div class="abs" style="left:0;top:103.7px;white-space:pre;font-family:'Liberation Mono',monospace;font-size:2.9px;line-height:2px;font-weight:bold"><span style="color:#FFFFFF">        </span><span style="color:#4EC9B0">String</span><span style="color:#FFFFFF"> </span><span style="color:#9CDCFE">sqlWithInt</span><span style="color:#FFFFFF"> = </span><span style="color:#CE9178">&quot;select * from students where id = &#x27;&quot;</span><span style="color:#FFFFFF"> + </span><span style="color:#9CDCFE">String</span><span style="color:#FFFFFF">.</span><span style="color:#DCDCAA">valueOf</span><span style="color:#179FFF">(</span><span style="color:#FFFFFF">id</span><span style="color:#179FFF">)</span><span style="color:#FFFFFF"> + </span><span style="color:#CE9178">&quot;&#x27;&quot;</span><span style="color:#FFFFFF">;</span></div><div class="abs" style="left:0;top:105.7px;white-space:pre;font-family:'Liberation Mono',monospace;font-size:2.9px;line-height:2px;font-weight:bold"><span style="color:#FFFFFF">        </span><span style="color:#C586C0">return</span><span style="color:#FFFFFF"> </span><span style="color:#9CDCFE">jdbcTemplate</span><span style="color:#FFFFFF">.</span><span style="color:#DCDCAA">query</span><span style="color:#179FFF">(</span><span style="color:#FFFFFF">sqlWithInt, ROW_MAPPER</span><span style="color:#179FFF">)</span><span style="color:#FFFFFF">;</span></div><div class="abs" style="left:0;top:107.7px;white-space:pre;font-family:'Liberation Mono',monospace;font-size:2.9px;line-height:2px;font-weight:bold"><span style="color:#FFFFFF">    </span><span style="color:#DA70D6">}</span></div><div class="abs" style="left:0;top:109.7px;white-space:pre;font-family:'Liberation Mono',monospace;font-size:2.9px;line-height:2px;font-weight:bold"></div><div class="abs" style="left:0;top:111.7px;white-space:pre;font-family:'Liberation Mono',monospace;font-size:2.9px;line-height:2px;font-weight:bold"><span style="color:#FFFFFF">    </span><span style="color:#569CD6">public</span><span style="color:#FFFFFF"> </span><span style="color:#4EC9B0">List</span><span style="color:#FFFFFF">&lt;</span><span style="color:#4EC9B0">Teacher</span><span style="color:#FFFFFF">&gt; </span><span style="color:#DCDCAA">getTeacherById</span><span style="color:#DA70D6">(</span><span style="color:#4EC9B0">String</span><span style="color:#FFFFFF"> </span><span style="color:#9CDCFE">userName</span><span style="color:#DA70D6">)</span><span style="color:#FFFFFF"> </span><span style="color:#DA70D6">{</span></div><div class="abs" style="left:0;top:113.7px;white-space:pre;font-family:'Liberation Mono',monospace;font-size:2.9px;line-height:2px;font-weight:bold"><span style="color:#FFFFFF">        </span><span style="color:#4EC9B0">String</span><span style="color:#FFFFFF"> </span><span style="color:#9CDCFE">sqlWithInt</span><span style="color:#FFFFFF"> = </span><span style="color:#CE9178">&quot;select * from teachers where id = &#x27;&quot;</span><span style="color:#FFFFFF"> + userName + </span><span style="color:#CE9178">&quot;&#x27;&quot;</span><span style="color:#FFFFFF">;</span></div><div class="abs" style="left:0;top:115.7px;white-space:pre;font-family:'Liberation Mono',monospace;font-size:2.9px;line-height:2px;font-weight:bold"><span style="color:#FFFFFF">        </span><span style="color:#C586C0">return</span><span style="color:#FFFFFF"> </span><span style="color:#9CDCFE">jdbcTemplate</span><span style="color:#FFFFFF">.</span><span style="color:#DCDCAA">query</span><span style="color:#179FFF">(</span><span style="color:#FFFFFF">sqlWithInt, ROW_MAPPER_TEACHER</span><span style="color:#179FFF">)</span><span style="color:#FFFFFF">;</span></div><div class="abs" style="left:0;top:117.7px;white-space:pre;font-family:'Liberation Mono',monospace;font-size:2.9px;line-height:2px;font-weight:bold"><span style="color:#FFFFFF">    </span><span style="color:#DA70D6">}</span></div><div class="abs" style="left:0;top:119.7px;white-space:pre;font-family:'Liberation Mono',monospace;font-size:2.9px;line-height:2px;font-weight:bold"></div><div class="abs" style="left:0;top:121.7px;white-space:pre;font-family:'Liberation Mono',monospace;font-size:2.9px;line-height:2px;font-weight:bold"><span style="color:#FFFFFF">    </span><span style="color:#569CD6">public</span><span style="color:#FFFFFF"> </span><span style="color:#4EC9B0">List</span><span style="color:#FFFFFF">&lt;</span><span style="color:#4EC9B0">Student</span><span style="color:#FFFFFF">&gt; </span><span style="color:#DCDCAA">getStudentWithIn</span><span style="color:#DA70D6">(</span><span style="color:#4EC9B0">List</span><span style="color:#FFFFFF">&lt;</span><span style="color:#4EC9B0">String</span><span style="color:#FFFFFF">&gt; </span><span style="color:#9CDCFE">name_list</span><span style="color:#DA70D6">)</span><span style="color:#FFFFFF"> </span><span style="color:#DA70D6">{</span></div><div class="abs" style="left:0;top:123.7px;white-space:pre;font-family:'Liberation Mono',monospace;font-size:2.9px;line-height:2px;font-weight:bold"><span style="color:#FFFFFF">        </span><span style="color:#C586C0">if</span><span style="color:#179FFF">(</span><span style="color:#9CDCFE">CollectionUtils</span><span style="color:#FFFFFF">.</span><span style="color:#DCDCAA">isEmpty</span><span style="color:#FFD700">(</span><span style="color:#FFFFFF">name_list</span><span style="color:#FFD700">)</span><span style="color:#179FFF">)</span><span style="color:#FFFFFF"> </span><span style="color:#179FFF">{</span></div><div class="abs" style="left:0;top:125.7px;white-space:pre;font-family:'Liberation Mono',monospace;font-size:2.9px;line-height:2px;font-weight:bold"><span style="color:#FFFFFF">            </span><span style="color:#C586C0">return</span><span style="color:#FFFFFF"> </span><span style="color:#9CDCFE">Collections</span><span style="color:#FFFFFF">.</span><span style="color:#9CDCFE">EMPTY_LIST</span><span style="color:#FFFFFF">;</span></div><div class="abs" style="left:0;top:127.7px;white-space:pre;font-family:'Liberation Mono',monospace;font-size:2.9px;line-height:2px;font-weight:bold"><span style="color:#FFFFFF">        </span><span style="color:#179FFF">}</span></div><div class="abs" style="left:0;top:129.7px;white-space:pre;font-family:'Liberation Mono',monospace;font-size:2.9px;line-height:2px;font-weight:bold"><span style="color:#FFFFFF">        </span><span style="color:#4EC9B0">String</span><span style="color:#FFFFFF"> </span><span style="color:#9CDCFE">sqlWithIn</span><span style="color:#FFFFFF"> = </span><span style="color:#CE9178">&quot;select * from students where username in (&#x27;&quot;</span><span style="color:#FFFFFF">+ </span><span style="color:#9CDCFE">Joiner</span><span style="color:#FFFFFF">.</span><span style="color:#DCDCAA">on</span><span style="color:#179FFF">(</span><span style="color:#CE9178">&quot;&#x27;,&#x27;&quot;</span><span style="color:#179FFF">)</span><span style="color:#FFFFFF">;</span></div><div class="abs" style="left:0;top:131.7px;white-space:pre;font-family:'Liberation Mono',monospace;font-size:2.9px;line-height:2px;font-weight:bold"><span style="color:#FFFFFF">        </span><span style="color:#C586C0">return</span><span style="color:#FFFFFF"> </span><span style="color:#9CDCFE">jdbcTemplate</span><span style="color:#FFFFFF">.</span><span style="color:#DCDCAA">query</span><span style="color:#179FFF">(</span><span style="color:#FFFFFF">sqlWithIn, ROW_MAPPER</span><span style="color:#179FFF">)</span><span style="color:#FFFFFF">;</span></div><div class="abs" style="left:0;top:133.7px;white-space:pre;font-family:'Liberation Mono',monospace;font-size:2.9px;line-height:2px;font-weight:bold"><span style="color:#FFFFFF">    </span><span style="color:#DA70D6">}</span></div><div class="abs" style="left:0;top:137.7px;white-space:pre;font-family:'Liberation Mono',monospace;font-size:2.9px;line-height:2px;font-weight:bold"><span style="color:#FFFFFF">    </span><span style="color:#569CD6">public</span><span style="color:#FFFFFF"> </span><span style="color:#4EC9B0">List</span><span style="color:#FFFFFF">&lt;</span><span style="color:#4EC9B0">Student</span><span style="color:#FFFFFF">&gt; </span><span style="color:#DCDCAA">getStudentWithIn</span><span style="color:#DA70D6">(</span><span style="color:#4EC9B0">List</span><span style="color:#FFFFFF">&lt;</span><span style="color:#4EC9B0">String</span><span style="color:#FFFFFF">&gt; </span><span style="color:#9CDCFE">name_list</span><span style="color:#DA70D6">)</span><span style="color:#FFFFFF"> </span><span style="color:#DA70D6">{</span></div><div class="abs" style="left:0;top:139.7px;white-space:pre;font-family:'Liberation Mono',monospace;font-size:2.9px;line-height:2px;font-weight:bold"><span style="color:#FFFFFF">        </span><span style="color:#C586C0">if</span><span style="color:#179FFF">(</span><span style="color:#9CDCFE">CollectionUtils</span><span style="color:#FFFFFF">.</span><span style="color:#DCDCAA">isEmpty</span><span style="color:#FFD700">(</span><span style="color:#FFFFFF">name_list</span><span style="color:#FFD700">)</span><span style="color:#179FFF">)</span><span style="color:#FFFFFF"> </span><span style="color:#179FFF">{</span></div><div class="abs" style="left:0;top:141.7px;white-space:pre;font-family:'Liberation Mono',monospace;font-size:2.9px;line-height:2px;font-weight:bold"><span style="color:#FFFFFF">            </span><span style="color:#C586C0">return</span><span style="color:#FFFFFF"> </span><span style="color:#9CDCFE">Collections</span><span style="color:#FFFFFF">.</span><span style="color:#9CDCFE">EMPTY_LIST</span><span style="color:#FFFFFF">;</span></div><div class="abs" style="left:0;top:143.7px;white-space:pre;font-family:'Liberation Mono',monospace;font-size:2.9px;line-height:2px;font-weight:bold"><span style="color:#FFFFFF">        </span><span style="color:#179FFF">}</span></div><div class="abs" style="left:0;top:145.7px;white-space:pre;font-family:'Liberation Mono',monospace;font-size:2.9px;line-height:2px;font-weight:bold"><span style="color:#FFFFFF">        </span><span style="color:#4EC9B0">String</span><span style="color:#FFFFFF"> </span><span style="color:#9CDCFE">sqlWithIn</span><span style="color:#FFFFFF"> = </span><span style="color:#CE9178">&quot;select * from students where username in (&#x27;&quot;</span><span style="color:#FFFFFF">+ </span><span style="color:#9CDCFE">Joiner</span><span style="color:#FFFFFF">.</span><span style="color:#DCDCAA">on</span><span style="color:#179FFF">(</span><span style="color:#CE9178">&quot;&#x27;,&#x27;&quot;</span><span style="color:#179FFF">)</span><span style="color:#FFFFFF">;</span></div><div class="abs" style="left:0;top:147.7px;white-space:pre;font-family:'Liberation Mono',monospace;font-size:2.9px;line-height:2px;font-weight:bold"><span style="color:#FFFFFF">        </span><span style="color:#C586C0">return</span><span style="color:#FFFFFF"> </span><span style="color:#9CDCFE">jdbcTemplate</span><span style="color:#FFFFFF">.</span><span style="color:#DCDCAA">query</span><span style="color:#179FFF">(</span><span style="color:#FFFFFF">sqlWithIn, ROW_MAPPER</span><span style="color:#179FFF">)</span><span style="color:#FFFFFF">;</span></div><div class="abs" style="left:0;top:149.7px;white-space:pre;font-family:'Liberation Mono',monospace;font-size:2.9px;line-height:2px;font-weight:bold"><span style="color:#FFFFFF">    </span><span style="color:#DA70D6">}</span></div><div class="abs" style="left:0;top:151.7px;white-space:pre;font-family:'Liberation Mono',monospace;font-size:2.9px;line-height:2px;font-weight:bold"><span style="color:#FFD700">}</span></div></div></div><div class="abs" style="left:891px;top:113.0px;width:25px;height:2px;background:#fff"></div><div class="abs" style="left:923px;top:22px;width:1px;height:852px;background:#181818"></div><div class="abs" style="left:924px;top:367.5px;width:16px;height:2px;background:#b0b0b0"></div><div class="abs" style="left:922px;top:368px;width:1px;height:1px;background:#6FC3DF"></div><div class="ui" style="left:975px;top:14px;font-size:22px;line-height:24px;font-weight:bold;color:#c4c4c4">&laquo;</div><div class="ui" style="left:1087.5px;top:14px;font-size:22px;line-height:24px;font-weight:bold;color:#c4c4c4">&raquo;</div><div class="ui" style="left:1008px;top:16px;line-height:20px;color:#fff">1</div><div class="abs" style="left:1002px;top:42px;width:52px;height:1px;background:#fff"></div><div class="ui" style="left:1057px;top:19px;line-height:20px;color:#fff">/ 1</div><div class="ui" style="left:1142px;top:6.5px;line-height:21.9px;font-size:15.95px;color:#fff">Sql-Injection on DATABASE - finished in 1 seconds (5 results) [2025/7/28<br>00:52:20]</div><div class="ui" style="left:1743px;top:10.2px;width:80px;text-align:center;line-height:18.6px;color:#21A6FF">Open<br>2.ql</div><div class="abs" style="left:942px;top:57px;width:883px;height:817px;overflow:hidden"><div class="ui" style="left:75.0px;top:-10.26px;width:30px;text-align:right;line-height:20px;color:#fff">2</div><div class="ui" style="left:121.5px;top:-11.26px;line-height:20px;font-size:16.2px;color:#21A6FF">getUsername(...) : String</div><div class="ui" style="left:268.3px;top:-11.26px;width:400px;text-align:right;line-height:20px;font-size:16.2px;color:#21A6FF">IndexController.java:46:38</div><div class="ui" style="left:75.0px;top:19.89px;width:30px;text-align:right;line-height:20px;color:#fff">3</div><div class="ui" style="left:121.5px;top:18.89px;line-height:20px;font-size:16.2px;color:#21A6FF">username : String</div><div class="ui" style="left:268.3px;top:18.89px;width:400px;text-align:right;line-height:20px;font-size:16.2px;color:#21A6FF">IndexLogic.java:18:37</div><div class="ui" style="left:75.0px;top:50.04px;width:30px;text-align:right;line-height:20px;color:#fff">4</div><div class="ui" style="left:121.5px;top:49.04px;line-height:20px;font-size:16.2px;color:#21A6FF">username : String</div><div class="ui" style="left:268.3px;top:49.04px;width:400px;text-align:right;line-height:20px;font-size:16.2px;color:#21A6FF">IndexLogic.java:19:35</div><div class="ui" style="left:75.0px;top:80.18px;width:30px;text-align:right;line-height:20px;color:#fff">5</div><div class="ui" style="left:121.5px;top:79.18px;line-height:20px;font-size:16.2px;color:#21A6FF">username : String</div><div class="ui" style="left:268.3px;top:79.18px;width:400px;text-align:right;line-height:20px;font-size:16.2px;color:#21A6FF">IndexDb.java:39:37</div><div class="ui" style="left:75.0px;top:110.33px;width:30px;text-align:right;line-height:20px;color:#fff">6</div><div class="ui" style="left:121.5px;top:109.33px;line-height:20px;font-size:16.2px;color:#21A6FF">sql</div><div class="ui" style="left:268.3px;top:109.33px;width:400px;text-align:right;line-height:20px;font-size:16.2px;color:#21A6FF">IndexDb.java:43:35</div><svg class="abs" style="left:64.0px;top:142.4px" width="9" height="15" viewBox="0 0 9 15"><path d="M1.2 1 L7.7 7.5 L1.2 14" fill="none" stroke="#d8d8d8" stroke-width="1.3"/></svg><div class="ui" style="left:91.5px;top:140.48px;line-height:20px;font-size:15.5px;color:#fff">Path (9 steps)</div><svg class="abs" style="left:31.0px;top:175.0px" width="15" height="9" viewBox="0 0 15 9"><path d="M1.2 1.2 L7 7 L12.8 1.2" fill="none" stroke="#dcdcdc" stroke-width="1.35"/></svg><svg class="abs" style="left:59.0px;top:172.7px" width="20" height="15" viewBox="0 0 20 15"><g fill="#b0b0b0"><rect x="0.3" y="0.4" width="1.6" height="1.2"/><rect x="0.3" y="4.15" width="1.6" height="1.2"/><rect x="0.3" y="7.9" width="1.6" height="1.2"/><rect x="0.3" y="11.65" width="1.6" height="1.2"/><rect x="4" y="0.3" width="13.8" height="1.3"/><rect x="4" y="4.05" width="13.8" height="1.3"/><rect x="4" y="7.8" width="13.8" height="1.3"/><rect x="4" y="11.55" width="13.8" height="1.3"/></g></svg><div class="abs" style="left:85.9px;top:167.6px;width:21.8px;height:21.8px;border:1.25px solid #6FC3DF;border-radius:50%"></div><div class="ui" style="left:86.0px;top:169.9px;width:24px;text-align:center;line-height:20px;font-size:14.5px;color:#fff">8</div><div class="ui" style="left:121.5px;top:169.63px;line-height:20px;font-size:16.08px;color:#fff">Potential SQL-injection: user input flows to SQL query.</div><div class="ui" style="left:468.3px;top:169.63px;width:400px;text-align:right;line-height:20px;font-size:16.2px;color:#21A6FF">IndexDb.java:49:35</div><svg class="abs" style="left:61.0px;top:205.7px" width="15" height="9" viewBox="0 0 15 9"><path d="M1.2 1.2 L7 7 L12.8 1.2" fill="none" stroke="#dcdcdc" stroke-width="1.35"/></svg><div class="ui" style="left:91.5px;top:200.78px;line-height:20px;font-size:15.5px;color:#fff">Path (8 steps)</div><div class="ui" style="left:75.0px;top:230.92px;width:30px;text-align:right;line-height:20px;color:#fff">1</div><div class="ui" style="left:121.5px;top:229.92px;line-height:20px;font-size:16.2px;color:#21A6FF">optinal_username : Optional</div><div class="ui" style="left:268.3px;top:229.92px;width:400px;text-align:right;line-height:20px;font-size:16.2px;color:#21A6FF">IndexController.java:64:39</div><div class="ui" style="left:75.0px;top:261.07px;width:30px;text-align:right;line-height:20px;color:#fff">2</div><div class="ui" style="left:121.5px;top:260.07px;line-height:20px;font-size:16.2px;color:#21A6FF">optinal_username : Optional</div><div class="ui" style="left:268.3px;top:260.07px;width:400px;text-align:right;line-height:20px;font-size:16.2px;color:#21A6FF">IndexController.java:65:50</div><div class="ui" style="left:75.0px;top:291.22px;width:30px;text-align:right;line-height:20px;color:#fff">3</div><div class="ui" style="left:121.5px;top:290.22px;line-height:20px;font-size:16.2px;color:#21A6FF">username : Optional</div><div class="ui" style="left:268.3px;top:290.22px;width:400px;text-align:right;line-height:20px;font-size:16.2px;color:#21A6FF">IndexLogic.java:26:49</div><div class="ui" style="left:75.0px;top:321.37px;width:30px;text-align:right;line-height:20px;color:#fff">4</div><div class="ui" style="left:121.5px;top:320.37px;line-height:20px;font-size:16.2px;color:#21A6FF">username : Optional</div><div class="ui" style="left:268.3px;top:320.37px;width:400px;text-align:right;line-height:20px;font-size:16.2px;color:#21A6FF">IndexLogic.java:27:47</div><div class="ui" style="left:75.0px;top:351.52px;width:30px;text-align:right;line-height:20px;color:#fff">5</div><div class="ui" style="left:121.5px;top:350.52px;line-height:20px;font-size:16.2px;color:#21A6FF">username : Optional</div><div class="ui" style="left:268.3px;top:350.52px;width:400px;text-align:right;line-height:20px;font-size:16.2px;color:#21A6FF">IndexDb.java:46:49</div><div class="ui" style="left:75.0px;top:381.66px;width:30px;text-align:right;line-height:20px;color:#fff">6</div><div class="ui" style="left:121.5px;top:380.66px;line-height:20px;font-size:16.2px;color:#21A6FF">username : Optional</div><div class="ui" style="left:268.3px;top:380.66px;width:400px;text-align:right;line-height:20px;font-size:16.2px;color:#21A6FF">IndexDb.java:47:84</div><div class="ui" style="left:75.0px;top:411.81px;width:30px;text-align:right;line-height:20px;color:#fff">7</div><div class="ui" style="left:121.5px;top:410.81px;line-height:20px;font-size:16.2px;color:#21A6FF">get(...) : String</div><div class="ui" style="left:268.3px;top:410.81px;width:400px;text-align:right;line-height:20px;font-size:16.2px;color:#21A6FF">IndexDb.java:47:84</div><div class="ui" style="left:75.0px;top:441.96px;width:30px;text-align:right;line-height:20px;color:#fff">8</div><div class="ui" style="left:121.5px;top:440.96px;line-height:20px;font-size:16.2px;color:#21A6FF">sqlWithOptional</div><div class="ui" style="left:268.3px;top:440.96px;width:400px;text-align:right;line-height:20px;font-size:16.2px;color:#21A6FF">IndexDb.java:49:35</div><svg class="abs" style="left:31.0px;top:476.5px" width="15" height="9" viewBox="0 0 15 9"><path d="M1.2 1.2 L7 7 L12.8 1.2" fill="none" stroke="#dcdcdc" stroke-width="1.35"/></svg><svg class="abs" style="left:59.0px;top:474.2px" width="20" height="15" viewBox="0 0 20 15"><g fill="#b0b0b0"><rect x="0.3" y="0.4" width="1.6" height="1.2"/><rect x="0.3" y="4.15" width="1.6" height="1.2"/><rect x="0.3" y="7.9" width="1.6" height="1.2"/><rect x="0.3" y="11.65" width="1.6" height="1.2"/><rect x="4" y="0.3" width="13.8" height="1.3"/><rect x="4" y="4.05" width="13.8" height="1.3"/><rect x="4" y="7.8" width="13.8" height="1.3"/><rect x="4" y="11.55" width="13.8" height="1.3"/></g></svg><div class="abs" style="left:85.9px;top:469.1px;width:21.8px;height:21.8px;border:1.25px solid #6FC3DF;border-radius:50%"></div><div class="ui" style="left:86.0px;top:471.4px;width:24px;text-align:center;line-height:20px;font-size:14.5px;color:#fff">6</div><div class="ui" style="left:121.5px;top:471.11px;line-height:20px;font-size:16.08px;color:#fff">Potential SQL-injection: user input flows to SQL query.</div><div class="ui" style="left:468.3px;top:471.11px;width:400px;text-align:right;line-height:20px;font-size:16.2px;color:#21A6FF">IndexDb.java:59:35</div><svg class="abs" style="left:61.0px;top:507.2px" width="15" height="9" viewBox="0 0 15 9"><path d="M1.2 1.2 L7 7 L12.8 1.2" fill="none" stroke="#dcdcdc" stroke-width="1.35"/></svg><div class="ui" style="left:91.5px;top:502.26px;line-height:20px;font-size:15.5px;color:#fff">Path (6 steps)</div><div class="ui" style="left:75.0px;top:532.40px;width:30px;text-align:right;line-height:20px;color:#fff">1</div><div class="ui" style="left:121.5px;top:531.40px;line-height:20px;font-size:16.2px;color:#21A6FF">user : Teacher</div><div class="ui" style="left:268.3px;top:531.40px;width:400px;text-align:right;line-height:20px;font-size:16.2px;color:#21A6FF">IndexController.java:59:39</div><div class="ui" style="left:75.0px;top:562.55px;width:30px;text-align:right;line-height:20px;color:#fff">2</div><div class="ui" style="left:121.5px;top:561.55px;line-height:20px;font-size:16.2px;color:#21A6FF">getName(...) : String</div><div class="ui" style="left:268.3px;top:561.55px;width:400px;text-align:right;line-height:20px;font-size:16.2px;color:#21A6FF">IndexController.java:60:42</div><div class="ui" style="left:75.0px;top:592.70px;width:30px;text-align:right;line-height:20px;color:#fff">3</div><div class="ui" style="left:121.5px;top:591.70px;line-height:20px;font-size:16.2px;color:#21A6FF">userName : String</div><div class="ui" style="left:268.3px;top:591.70px;width:400px;text-align:right;line-height:20px;font-size:16.2px;color:#21A6FF">IndexLogic.java:38:41</div><div class="ui" style="left:75.0px;top:622.85px;width:30px;text-align:right;line-height:20px;color:#fff">4</div><div class="ui" style="left:121.5px;top:621.85px;line-height:20px;font-size:16.2px;color:#21A6FF">userName : String</div><div class="ui" style="left:268.3px;top:621.85px;width:400px;text-align:right;line-height:20px;font-size:16.2px;color:#21A6FF">IndexLogic.java:39:39</div><div class="ui" style="left:75.0px;top:653.00px;width:30px;text-align:right;line-height:20px;color:#fff">5</div><div class="ui" style="left:121.5px;top:652.00px;line-height:20px;font-size:16.2px;color:#21A6FF">userName : String</div><div class="ui" style="left:268.3px;top:652.00px;width:400px;text-align:right;line-height:20px;font-size:16.2px;color:#21A6FF">IndexDb.java:57:41</div><div class="ui" style="left:75.0px;top:683.14px;width:30px;text-align:right;line-height:20px;color:#fff">6</div><div class="ui" style="left:121.5px;top:682.14px;line-height:20px;font-size:16.2px;color:#21A6FF">sqlWithInt</div><div class="ui" style="left:268.3px;top:682.14px;width:400px;text-align:right;line-height:20px;font-size:16.2px;color:#21A6FF">IndexDb.java:59:35</div><svg class="abs" style="left:61.0px;top:718.2px" width="15" height="9" viewBox="0 0 15 9"><path d="M1.2 1.2 L7 7 L12.8 1.2" fill="none" stroke="#dcdcdc" stroke-width="1.35"/></svg><div class="ui" style="left:91.5px;top:713.29px;line-height:20px;font-size:15.5px;color:#fff">Path (9 steps)</div><div class="ui" style="left:75.0px;top:743.44px;width:30px;text-align:right;line-height:20px;color:#fff">1</div><div class="ui" style="left:121.5px;top:742.44px;line-height:20px;font-size:16.2px;color:#21A6FF">user : Teacher</div><div class="ui" style="left:268.3px;top:742.44px;width:400px;text-align:right;line-height:20px;font-size:16.2px;color:#21A6FF">IndexController.java:59:39</div><div class="ui" style="left:75.0px;top:773.59px;width:30px;text-align:right;line-height:20px;color:#fff">2</div><div class="ui" style="left:121.5px;top:772.59px;line-height:20px;font-size:16.2px;color:#21A6FF">user : Teacher</div><div class="ui" style="left:268.3px;top:772.59px;width:400px;text-align:right;line-height:20px;font-size:16.2px;color:#21A6FF">IndexController.java:60:42</div><div class="ui" style="left:75.0px;top:803.74px;width:30px;text-align:right;line-height:20px;color:#fff">3</div><div class="ui" style="left:121.5px;top:802.74px;line-height:20px;font-size:16.2px;color:#21A6FF">parameter this : Teacher</div><div class="ui" style="left:268.3px;top:802.74px;width:400px;text-align:right;line-height:20px;font-size:16.2px;color:#21A6FF">Teacher.java:8:20</div><div class="tg" style="left:38.0px;top:0.0px;height:164.0px"></div><div class="tg" style="left:38.0px;top:195.0px;height:270.0px"></div><div class="tg" style="left:38.0px;top:495.0px;height:322.0px"></div><div class="tg" style="left:68.0px;top:0.0px;height:133.5px"></div><div class="tg" style="left:68.0px;top:224.5px;height:240.5px"></div><div class="tg" style="left:68.0px;top:525.0px;height:181.0px"></div><div class="tg" style="left:68.0px;top:736.0px;height:81.0px"></div></div></body></html>
